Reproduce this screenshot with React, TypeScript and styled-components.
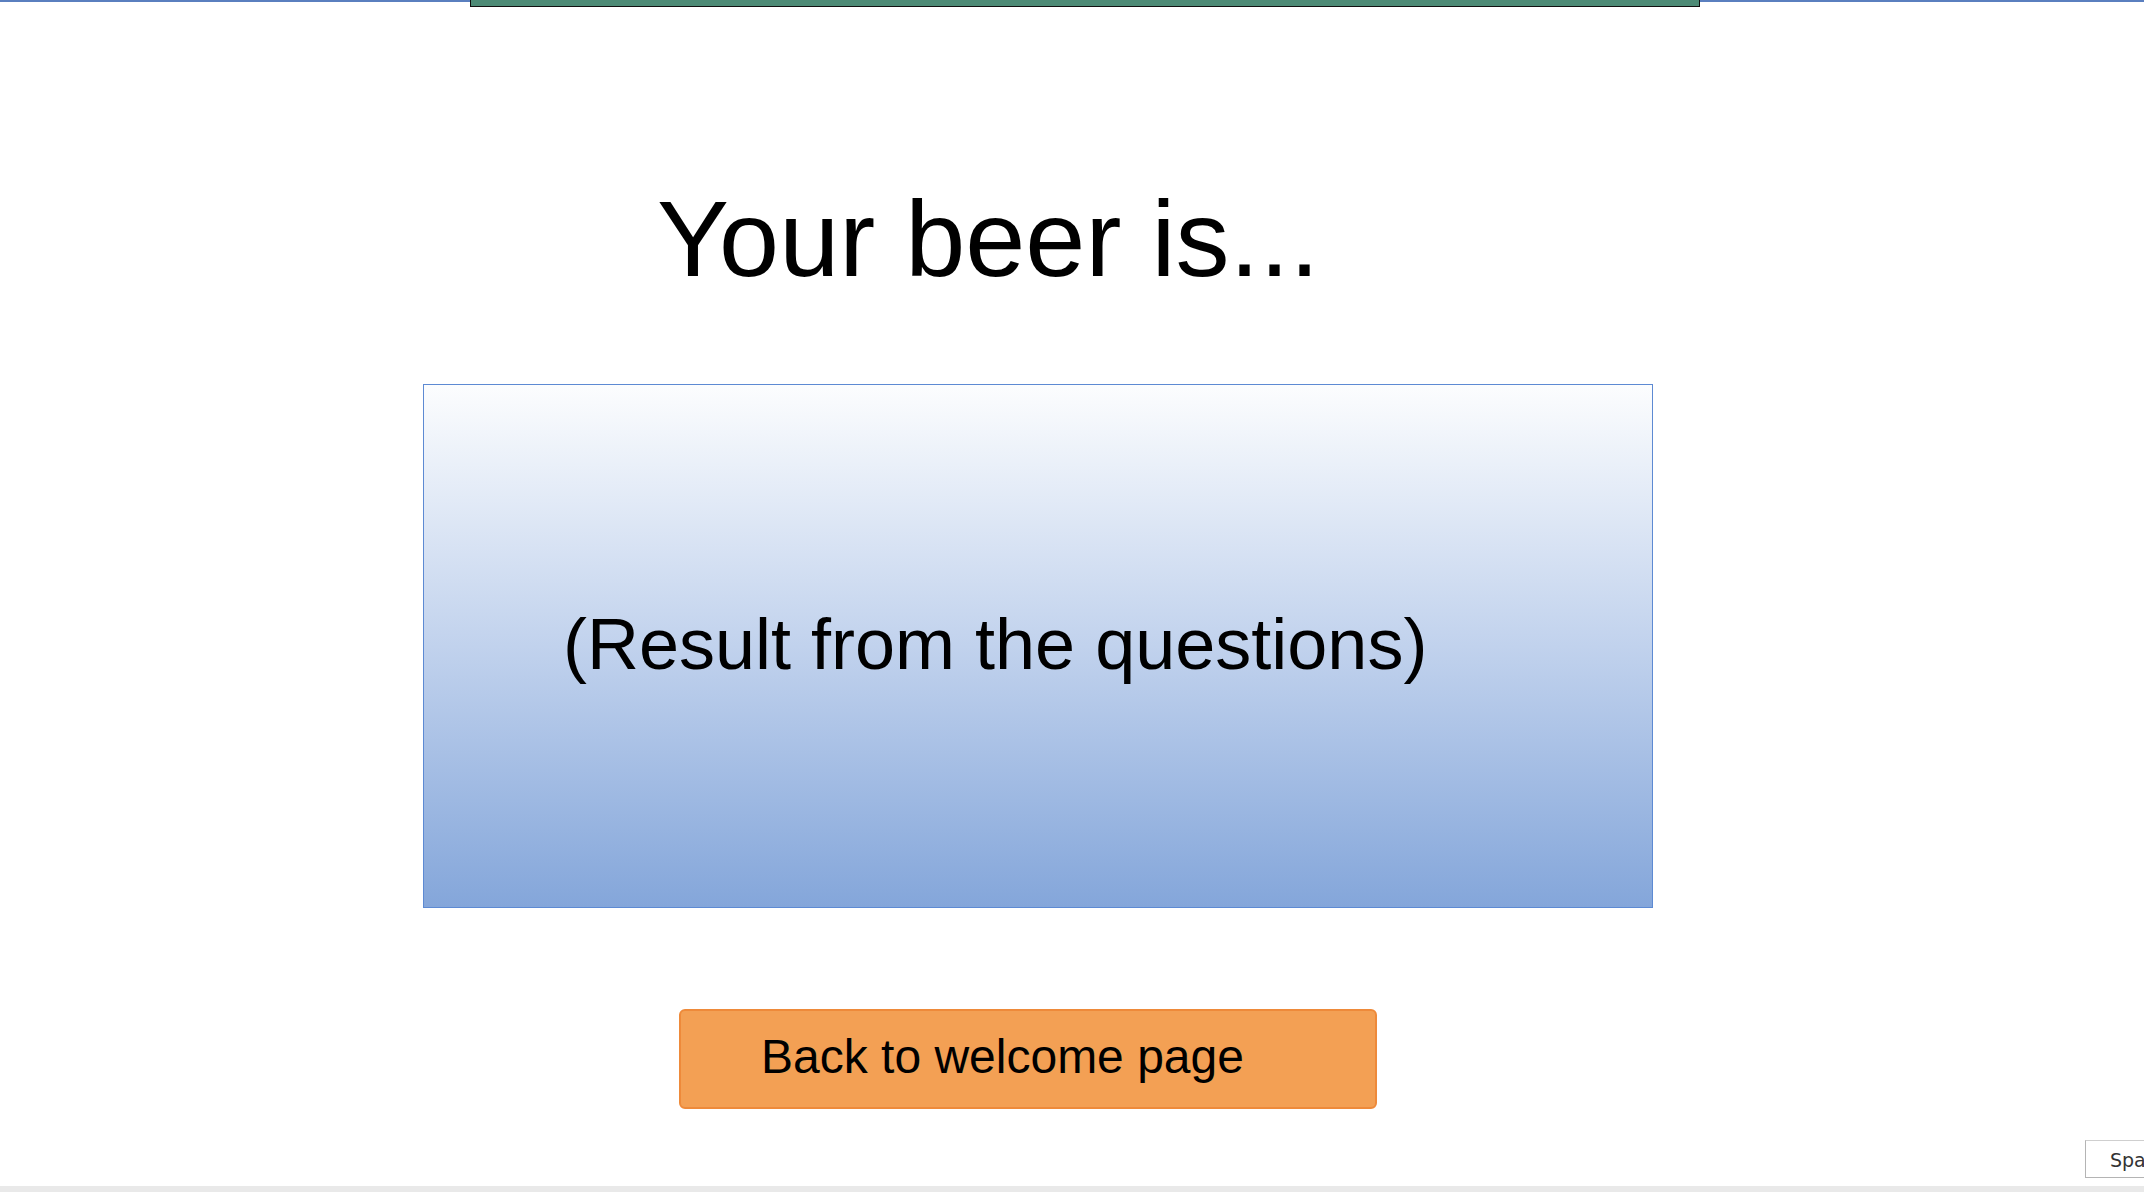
import React from "react";
import styled, { createGlobalStyle } from "styled-components";

const GlobalStyle = createGlobalStyle`
  html, body {
    margin: 0;
    padding: 0;
    background: #ffffff;
    overflow: hidden;
  }
  body {
    font-family: "Liberation Sans", Arial, sans-serif;
  }
`;

const Page = styled.div`
  width: 2144px;
  height: 1192px;
  display: flex;
  flex-direction: column;
  overflow: hidden;
  background: #ffffff;
`;

const TopStrip = styled.div`
  display: flex;
  align-items: flex-start;
  height: 7px;
  flex-shrink: 0;
`;

const BlueLine = styled.div<{ $grow?: boolean; $width?: number }>`
  height: 2px;
  background: #5a7fbf;
  flex: ${(p) => (p.$grow ? "1 1 auto" : `0 0 ${p.$width}px`)};
`;

const GreenTab = styled.div`
  flex: 0 0 1230px;
  box-sizing: border-box;
  height: 7px;
  background: #4d8b76;
  border: 1px solid #111;
  border-top: none;
`;

const Main = styled.main`
  flex: 1 1 auto;
  display: flex;
  flex-direction: column;
  align-items: flex-start;
  padding-top: 178px;
`;

const Heading = styled.h1`
  margin: 0 0 0 657px;
  font-family: "Liberation Sans", Arial, sans-serif;
  font-weight: 400;
  font-size: 108px;
  line-height: 1;
  color: #000;
  white-space: nowrap;
`;

const ResultBox = styled.section`
  margin: 91px 0 0 423px;
  box-sizing: border-box;
  width: 1230px;
  height: 524px;
  border: 1px solid #5d8ad3;
  background: linear-gradient(to bottom, #fcfdfe 0%, #c1d2ed 50%, #84a6da 100%);
  display: flex;
  align-items: center;
  padding: 0 0 4px 139px;
`;

const ResultText = styled.p`
  margin: 0;
  font-family: "Liberation Sans", Arial, sans-serif;
  font-size: 72px;
  line-height: 1;
  color: #000;
  white-space: nowrap;
`;

const BackButton = styled.button`
  margin: 101px 0 0 679px;
  box-sizing: border-box;
  width: 698px;
  height: 100px;
  background: #f3a054;
  border: 2px solid #ee8a3a;
  border-radius: 6px;
  display: flex;
  align-items: center;
  padding: 0 0 4px 80px;
  font-family: "Liberation Sans", Arial, sans-serif;
  font-size: 48px;
  line-height: 1;
  color: #000;
  cursor: pointer;
  white-space: nowrap;
`;

const Footer = styled.footer`
  flex-shrink: 0;
  display: flex;
  flex-direction: column;
`;

const FooterRow = styled.div`
  display: flex;
  justify-content: flex-end;
  overflow: hidden;
`;

const LangBox = styled.div`
  box-sizing: border-box;
  flex-shrink: 0;
  width: 120px;
  height: 38px;
  margin-right: -61px;
  border: 1px solid #b4b4b4;
  border-top-color: #cfcfcf;
  background: #ffffff;
  display: flex;
  align-items: center;
  padding: 2px 0 0 24px;
  font-family: "DejaVu Sans", Verdana, sans-serif;
  font-size: 19px;
  line-height: 1;
  color: #333;
  white-space: nowrap;
  overflow: hidden;
`;

const GrayBand = styled.div`
  margin-top: 8px;
  height: 6px;
  background: #e9e9e9;
`;

export default function App() {
  return (
    <>
      <GlobalStyle />
      <Page>
        <TopStrip>
          <BlueLine $width={470} />
          <GreenTab />
          <BlueLine $grow />
        </TopStrip>
        <Main>
          <Heading>Your beer is...</Heading>
          <ResultBox>
            <ResultText>(Result from the questions)</ResultText>
          </ResultBox>
          <BackButton type="button">Back to welcome page</BackButton>
        </Main>
        <Footer>
          <FooterRow>
            <LangBox>Spanish</LangBox>
          </FooterRow>
          <GrayBand />
        </Footer>
      </Page>
    </>
  );
}
